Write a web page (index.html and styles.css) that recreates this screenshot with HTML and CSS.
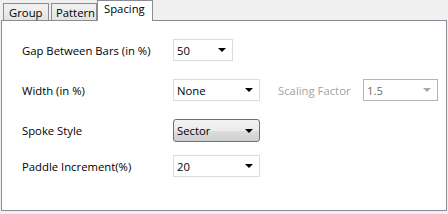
FILE: index.html
```html
<!DOCTYPE html>
<html lang="en">
<head>
<meta charset="UTF-8">
<title>Spacing</title>
<link rel="stylesheet" href="styles.css">
</head>
<body>
  <div class="tabs">
    <div class="tab tab-group">Group</div>
    <div class="tab tab-pattern">Pattern</div>
    <div class="tab tab-active">Spacing</div>
  </div>

  <div class="panel">
    <div class="row row-gap">
      <span class="label">Gap Between Bars (in %)</span>
      <div class="combo combo-short"><span>50</span><i class="arrow"></i></div>
    </div>

    <div class="row row-width">
      <span class="label">Width (in %)</span>
      <div class="combo"><span>None</span><i class="arrow"></i></div>
      <span class="label-disabled">Scaling Factor</span>
      <div class="combo combo-disabled"><span>1.5</span><i class="arrow"></i></div>
    </div>

    <div class="row row-spoke">
      <span class="label">Spoke Style</span>
      <div class="combo combo-button"><span>Sector</span><i class="arrow"></i></div>
    </div>

    <div class="row row-paddle">
      <span class="label">Paddle Increment(%)</span>
      <div class="combo"><span>20</span><i class="arrow"></i></div>
    </div>
  </div>
</body>
</html>
```

FILE: styles.css
```css
body {
  margin: 0;
  width: 448px;
  height: 214px;
  background: #f0f0f0;
  font-family: "Open Sans", "Noto Sans", sans-serif;
  font-size: 11.3px;
  color: #000000;
  overflow: hidden;
}

.tabs {
  display: flex;
  align-items: flex-end;
  height: 20px;
  padding-left: 3px;
}

.tab {
  box-sizing: border-box;
  height: 17px;
  line-height: 17px;
  padding-left: 5px;
  border: 1px solid #898c95;
  border-bottom: none;
  background: linear-gradient(#f2f2f2, #e3e3e3);
  white-space: nowrap;
}

.tab-group {
  width: 46px;
}

.tab-pattern {
  width: 46px;
  margin-left: 2px;
  padding-left: 4px;
}

.tab-active {
  position: relative;
  z-index: 1;
  width: 56px;
  height: 21px;
  margin-bottom: -1px;
  padding-left: 6px;
  line-height: 16px;
  background: #ffffff;
}

.panel {
  box-sizing: border-box;
  width: 446px;
  height: 191px;
  margin-left: 1px;
  padding: 18px 0 0 20px;
  background: #ffffff;
  border: 1px solid #898c95;
}

.row {
  display: flex;
  align-items: center;
}

.row-width,
.row-spoke {
  margin-top: 18px;
}

.row-paddle {
  margin-top: 13px;
}

.label {
  width: 151px;
}

.label-disabled {
  width: 85px;
  margin-left: 18px;
  color: #a3a3a3;
}

.combo {
  box-sizing: border-box;
  display: flex;
  align-items: center;
  justify-content: space-between;
  width: 87px;
  height: 22px;
  padding: 0 6px 0 3px;
  border: 1px solid #dcdcdc;
  background: #ffffff;
}

.combo-short {
  width: 60px;
}

.combo-disabled {
  width: 75px;
  border-color: #b5b5b5;
  color: #6d6d6d;
}

.combo-button {
  height: 23px;
  border-color: #707070;
  border-radius: 3px;
  background: linear-gradient(#f2f2f2 0%, #ebebeb 50%, #dddddd 51%, #cfcfcf 100%);
}

.arrow {
  width: 0;
  height: 0;
  border-left: 4px solid transparent;
  border-right: 4px solid transparent;
  border-top: 4px solid #000000;
}

.combo-disabled .arrow {
  border-top-color: #a8a8a8;
}
```
